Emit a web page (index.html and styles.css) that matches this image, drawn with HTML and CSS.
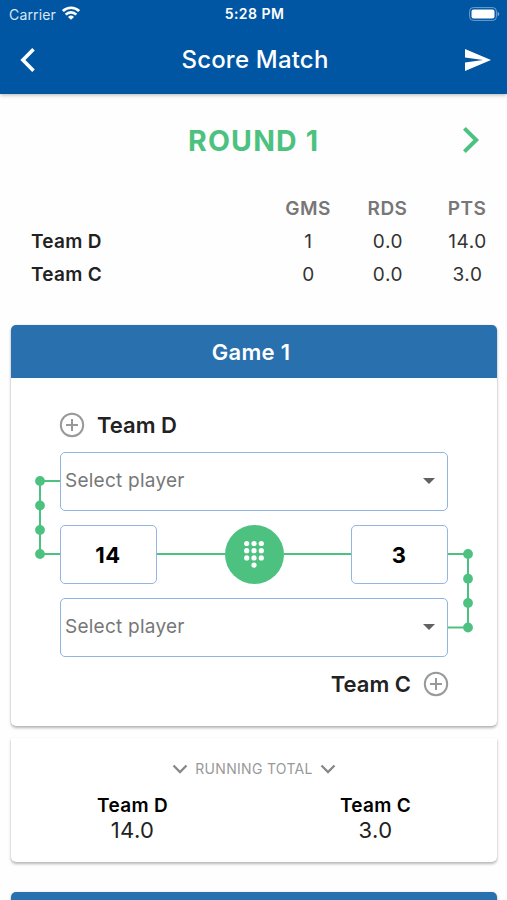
FILE: index.html
```html
<!DOCTYPE html>
<html lang="en">
<head>
<meta charset="utf-8">
<title>Score Match</title>
<link rel="stylesheet" href="styles.css">
</head>
<body>
<div class="screen">
  <header class="app-header">
    <div class="status-bar">
      <div class="carrier"><span>Carrier</span>
        <svg width="18" height="14" viewBox="0 0 18 14" fill="none" stroke="#fff" stroke-width="2.7"><path d="M.9 5.100a11.500 11.500 0 0 1 16.200 0M3.700 8.600a7.500 7.500 0 0 1 10.600 0"/><path d="M9 13.800 6 10.900a4.300 4.300 0 0 1 6 0z" fill="#fff" stroke="none"/></svg>
      </div>
      <div class="clock">5:28 PM</div>
      <svg class="battery" width="31" height="14" viewBox="0 0 31 14"><rect x=".6" y=".6" width="26.800" height="12.800" rx="3.600" fill="none" stroke="#6f9fcb"/><rect x="2.500" y="2.500" width="23" height="9" rx="2" fill="#fff"/><path d="M28.600 4.500Q32 7 28.600 9.500Z" fill="#7fa9d0"/></svg>
    </div>
    <div class="nav-bar">
      <svg width="16" height="26" viewBox="0 0 16 26" fill="none" stroke="#fff" stroke-width="3.600"><path d="M13.500 2.200 2.900 13l10.600 10.800"/></svg>
      <h1>Score Match</h1>
      <svg width="26" height="22" viewBox="0 0 26 22" fill="#fff"><path d="M0 0 26 11 0 22V13.400L18 11 0 8.600z"/></svg>
    </div>
  </header>

  <div class="round">
    <h2>ROUND 1</h2>
    <svg width="18" height="28" viewBox="0 0 18 28" fill="none" stroke="#4dc280" stroke-width="4"><path d="M2.400 2.400 14.200 14 2.400 25.600"/></svg>
  </div>

  <div class="standings">
    <span></span><b class="col">GMS</b><b class="col">RDS</b><b class="col">PTS</b>
    <b>Team D</b><span class="num">1</span><span class="num">0.0</span><span class="num">14.0</span>
    <b>Team C</b><span class="num">0</span><span class="num">0.0</span><span class="num">3.0</span>
  </div>

  <section class="card game">
    <h3>Game 1</h3>
    <div class="team">
      <svg class="plus" width="26" height="26" viewBox="0 0 26 26"><circle cx="13" cy="13" r="11.200"/><path d="M13 7v12M7 13h12"/></svg>
      <span>Team D</span>
    </div>
    <div class="board">
      <svg class="link link-left" width="49" height="132" viewBox="0 0 49 132"><path d="M49 29H29V102H49"/><circle cx="29" cy="29" r="4.900"/><circle cx="29" cy="53.500" r="4.900"/><circle cx="29" cy="78" r="4.900"/><circle cx="29" cy="102" r="4.900"/></svg>
      <div class="select select-top"><span>Select player</span><i class="caret"></i></div>
      <div class="scores">
        <div class="score">14</div>
        <div class="line"></div>
        <div class="keypad">
          <svg width="22" height="28" viewBox="0 0 22 28" fill="#fff"><circle cx="3.700" cy="3.500" r="2.600"/><circle cx="11" cy="3.500" r="2.600"/><circle cx="18.300" cy="3.500" r="2.600"/><circle cx="3.700" cy="10.700" r="2.600"/><circle cx="11" cy="10.700" r="2.600"/><circle cx="18.300" cy="10.700" r="2.600"/><circle cx="3.700" cy="17.900" r="2.600"/><circle cx="11" cy="17.900" r="2.600"/><circle cx="18.300" cy="17.900" r="2.600"/><circle cx="11" cy="25.100" r="2.600"/></svg>
        </div>
        <div class="line"></div>
        <div class="score">3</div>
      </div>
      <div class="select select-bottom"><span>Select player</span><i class="caret"></i></div>
      <svg class="link link-right" width="49" height="133" viewBox="0 0 49 133"><path d="M0 29H20V102.500H0"/><circle cx="20" cy="29" r="4.900"/><circle cx="20" cy="53.700" r="4.900"/><circle cx="20" cy="78" r="4.900"/><circle cx="20" cy="102.500" r="4.900"/></svg>
    </div>
    <div class="team team-away">
      <span>Team C</span>
      <svg class="plus" width="26" height="26" viewBox="0 0 26 26"><circle cx="13" cy="13" r="11.200"/><path d="M13 7v12M7 13h12"/></svg>
    </div>
  </section>

  <section class="card totals">
    <div class="totals-title">
      <svg width="16" height="10" viewBox="0 0 16 10"><path d="M1.500 1.500 8 8l6.500-6.500"/></svg>
      <span>RUNNING TOTAL</span>
      <svg width="16" height="10" viewBox="0 0 16 10"><path d="M1.500 1.500 8 8l6.500-6.500"/></svg>
    </div>
    <div class="totals-row">
      <div><b>Team D</b><span>14.0</span></div>
      <div><b>Team C</b><span>3.0</span></div>
    </div>
  </section>

  <section class="card next"><h3></h3></section>
</div>
</body>
</html>
```
FILE: styles.css
```css
* { box-sizing: border-box; }
body { margin: 0; background: #fefefe; font-family: Inter, "Liberation Sans", sans-serif; color: #222; }
h1, h2, h3 { margin: 0; }
svg { display: block; flex: none; }
.screen { height: 900px; overflow: hidden; white-space: nowrap; }

.app-header { height: 94px; background: #0056a2; color: #fff; box-shadow: 0 1px 4px rgba(0,0,0,.3); }
.status-bar { height: 28px; padding: 0 7px 0 9px; display: grid; grid-template-columns: 1fr auto 1fr; align-items: center; font-size: 14px; }
.carrier { display: flex; align-items: center; gap: 6px; color: #dbe7f3; letter-spacing: .15px; }
.carrier svg { margin-top: -2px; }
.clock { font-weight: 600; letter-spacing: .45px; margin-top: -1px; }
.battery { justify-self: end; margin-top: -1px; }
.nav-bar { height: 64px; padding: 0 16px 0 20px; display: flex; align-items: center; justify-content: space-between; }
.nav-bar h1 { font-size: 24px; font-weight: 500; letter-spacing: .2px; margin: -1px 0 0 9px; }

.round { height: 93px; padding: 0 27px 0 188px; display: flex; align-items: center; justify-content: space-between; color: #4dc280; }
.round h2 { font-size: 28.500px; font-weight: 700; letter-spacing: 1.200px; }
.round svg { margin-top: -2px; }

.standings { height: 138px; padding: 5px 0 0 31px; display: grid; grid-template-columns: 237px 80px 79px 80px; grid-auto-rows: 33px; line-height: 33px; font-size: 19px; }
.standings b { font-weight: 600; letter-spacing: .3px; }
.standings .col { color: #777; text-align: center; letter-spacing: .5px; }
.standings .num { text-align: center; color: #333; letter-spacing: .6px; padding-left: 1px; }

.card { margin: 0 10px 0 11px; border-radius: 5px; background: #fff; box-shadow: 0 2px 3px rgba(0,0,0,.28), 0 0 2px rgba(0,0,0,.12); }
.card h3 { height: 53px; line-height: 54px; background: #2970af; color: #fff; text-align: center; font-size: 22px; font-weight: 600; letter-spacing: .3px; border-radius: 5px 5px 0 0; padding-right: 6px; }
.game { height: 401px; }
.team { height: 74px; padding: 20px 49px 0 48px; display: flex; gap: 12px; font-size: 22px; font-weight: 600; line-height: 54px; }
.team svg { margin-top: 14px; }
.team-away { justify-content: flex-end; padding-top: 0; }
.team-away svg { margin-right: -1px; }
.plus { fill: none; stroke: #999; stroke-width: 2; }

.board { display: grid; grid-template-columns: 49px 388px 49px; grid-template-rows: 59px 59px 59px; row-gap: 14px; }
.link { fill: none; stroke: #4dc280; stroke-width: 2; }
.link circle { fill: #4dc280; stroke: none; }
.link-left { grid-column: 1; grid-row: 1 / 3; }
.link-right { grid-column: 3; grid-row: 2 / 4; }
.select { grid-column: 2; border: 1px solid #8fb6de; border-radius: 5px; padding: 0 12px 2px 4px; display: flex; align-items: center; justify-content: space-between; font-size: 19px; letter-spacing: .25px; color: #777; }
.select-top { grid-row: 1; }
.select-bottom { grid-row: 3; }
.caret { border: 6px solid transparent; border-top-color: #616161; border-bottom: 0; }
.scores { grid-column: 2; grid-row: 2; display: flex; align-items: center; }
.score { width: 97px; height: 59px; border: 1px solid #94b5df; border-radius: 5px; padding-right: 1px; text-align: center; line-height: 58px; font-size: 22px; font-weight: 700; letter-spacing: .5px; color: #000; }
.line { flex: 1; height: 2px; margin-top: -1px; background: #4dc280; }
.keypad { width: 59px; height: 59px; border-radius: 50%; background: #4dc280; display: flex; align-items: center; justify-content: center; }
.keypad svg { margin-top: -1px; }

.totals { height: 124px; margin-top: 12px; padding-top: 22px; border-radius: 0 0 5px 5px; box-shadow: 0 2px 3px rgba(0,0,0,.28), 0 0 1px rgba(0,0,0,.14); }
.totals-title { display: flex; justify-content: center; align-items: center; gap: 7px; height: 17px; font-size: 14px; letter-spacing: .3px; color: #999; }
.totals-title svg { fill: none; stroke: #888; stroke-width: 2.300; }
.totals-row { display: grid; grid-template-columns: 1fr 1fr; text-align: center; color: #000; padding-top: 16px; }
.totals-row b, .totals-row span { display: block; }
.totals-row b { font-size: 19px; font-weight: 600; line-height: 25px; letter-spacing: .3px; }
.totals-row span { font-size: 22px; line-height: 25px; letter-spacing: .4px; color: #222; }
.next { margin-top: 30px; }
```
